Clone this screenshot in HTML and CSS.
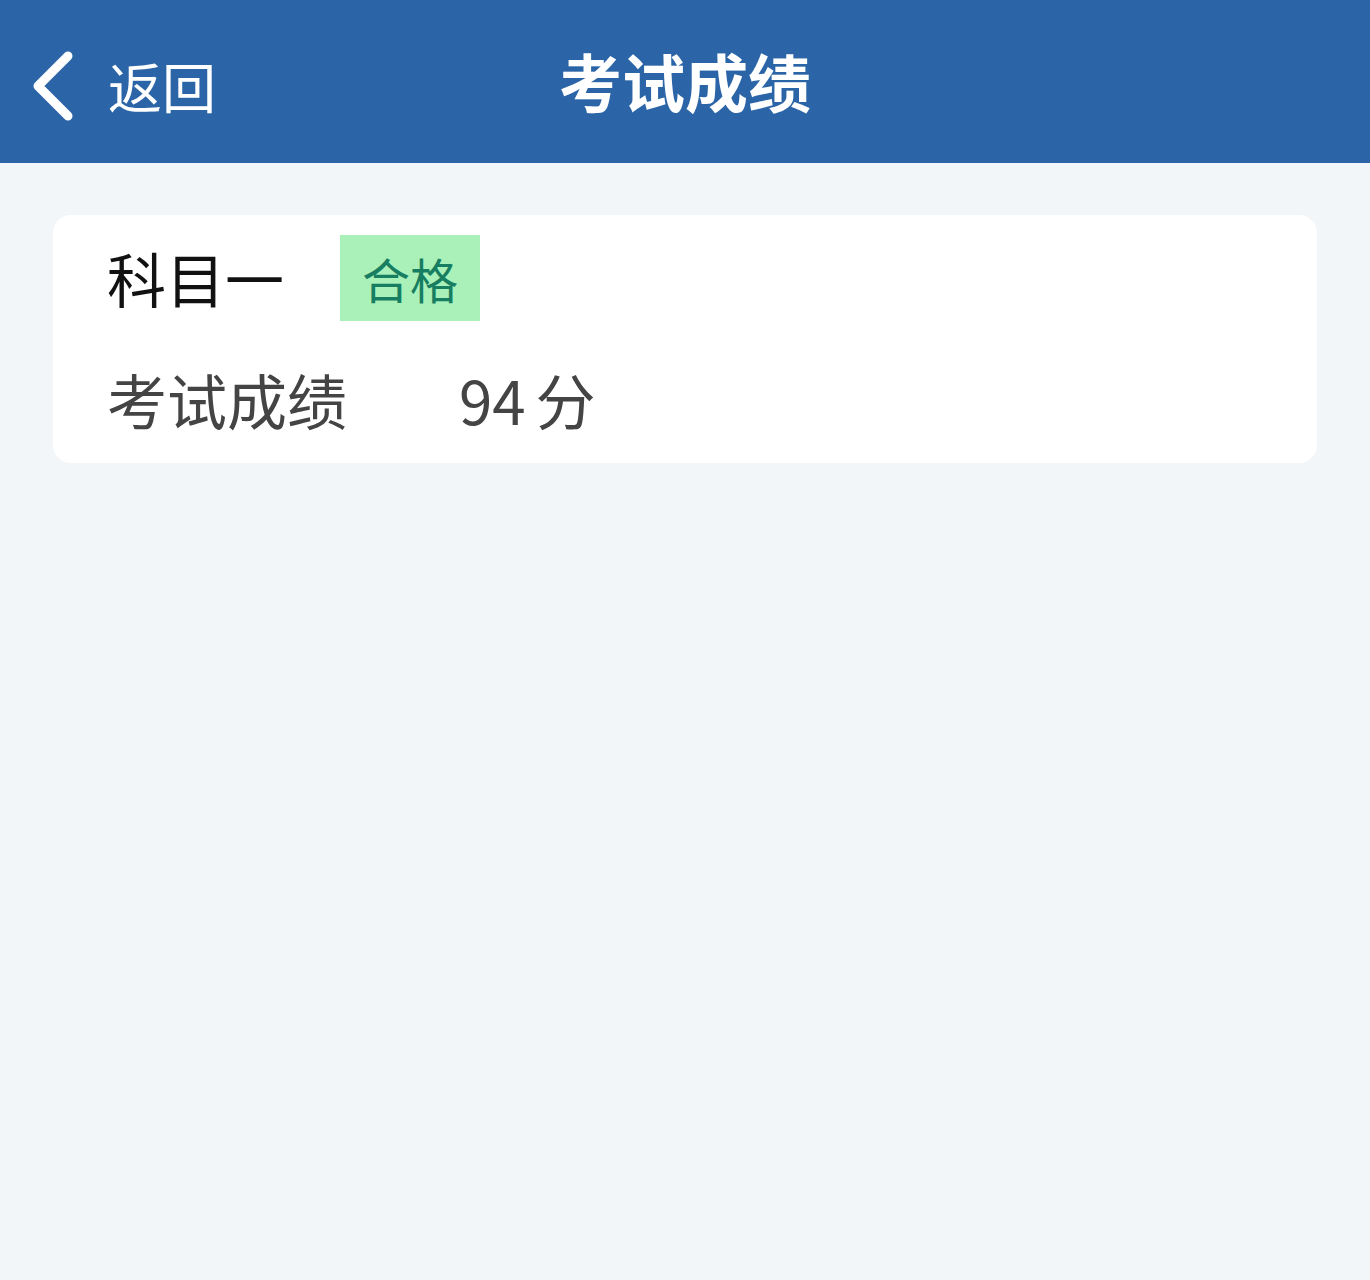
FILE: index.html
```html
<!DOCTYPE html>
<html lang="zh-CN">
<head>
<meta charset="utf-8">
<title>考试成绩</title>
<link rel="stylesheet" href="styles.css">
</head>
<body>
<header class="topbar">
  <a class="back">
    <svg class="back-icon" width="48" height="72" viewBox="0 0 48 72"><polyline points="36,6 6,36 36,66" fill="none" stroke="#fff" stroke-width="9" stroke-linecap="round" stroke-linejoin="round"/></svg>
    <span class="back-text">返回</span>
  </a>
  <h1 class="title">考试成绩</h1>
</header>
<main class="content">
  <section class="card">
    <div class="row row-head">
      <span class="subject">科目一</span>
      <span class="badge">合格</span>
    </div>
    <div class="row row-score">
      <span class="label">考试成绩</span>
      <span class="value">94<span class="unit">分</span></span>
    </div>
  </section>
</main>
</body>
</html>
```
FILE: styles.css
```css
* { box-sizing: border-box; }
html, body { margin: 0; padding: 0; }
body {
  width: 1370px;
  min-height: 1280px;
  background: #f3f6f8;
  font-family: "Noto Sans CJK SC", "Noto Sans", sans-serif;
}
.topbar {
  position: relative;
  height: 163px;
  background: #2b65a7;
  display: flex;
  align-items: center;
  justify-content: center;
}
.back {
  position: absolute;
  left: 32px;
  top: 50px;
  display: flex;
  align-items: center;
  color: #fff;
}
.back-icon { display: block; }
.back-text {
  margin-left: 28px;
  font-size: 54px;
  line-height: 72px;
  letter-spacing: 0;
}
.title {
  margin: 0;
  color: #fff;
  font-size: 63px;
  font-weight: 700;
  line-height: 80px;
  margin-top: -4px;
}
.content {
  padding: 52px 53px 0;
}
.card {
  background: #fff;
  border-radius: 18px;
  padding: 20px 54px 34px;
}
.row {
  display: flex;
  align-items: center;
}
.row-head { height: 86px; }
.subject {
  font-size: 59px;
  color: #111;
  line-height: 86px;
}
.badge {
  margin-left: 56px;
  height: 86px;
  padding: 0 22px;
  background: #a9f1b9;
  color: #177e61;
  font-size: 48px;
  line-height: 86px;
}
.row-score {
  margin-top: 48px;
  height: 60px;
  color: #444;
  font-size: 60px;
  line-height: 60px;
}
.value { margin-left: 112px; }
.unit { margin-left: 10px; }
```
